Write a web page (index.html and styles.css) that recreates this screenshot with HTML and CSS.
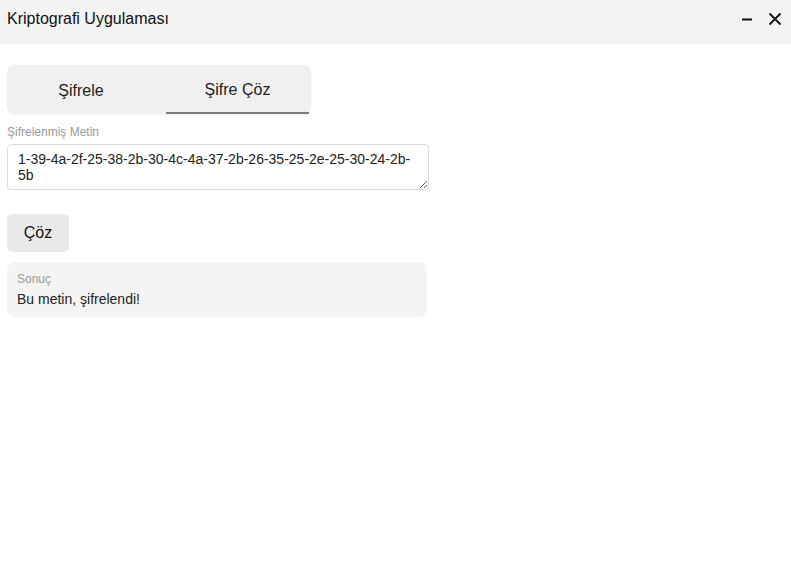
FILE: index.html
```html
<!DOCTYPE html>
<html lang="tr">
<head>
<meta charset="utf-8">
<link rel="stylesheet" href="styles.css">
</head>
<body>
<header class="titlebar">
  <span class="title">Kriptografi Uygulaması</span>
  <div class="controls">
    <svg class="ctl min" width="12" height="12" viewBox="0 0 12 12"><path d="M1 6.5h10" stroke="#111" stroke-width="2"/></svg>
    <svg class="ctl close" width="14" height="14" viewBox="0 0 14 14"><path d="M1.5 1.5l11 11M12.5 1.5l-11 11" stroke="#111" stroke-width="1.8"/></svg>
  </div>
</header>
<main class="content">
  <div class="tabs">
    <div class="tab first">Şifrele</div>
    <div class="tab active">Şifre Çöz</div>
  </div>
  <label class="label">Şifrelenmiş Metin</label>
  <textarea class="input">1-39-4a-2f-25-38-2b-30-4c-4a-37-2b-26-35-25-2e-25-30-24-2b-5b</textarea>
  <button class="btn">Çöz</button>
  <div class="result">
    <div class="result-label">Sonuç</div>
    <div class="result-text">Bu metin, şifrelendi!</div>
  </div>
</main>
</body>
</html>
```
FILE: styles.css
```css
* { box-sizing: border-box; }
html, body { margin: 0; padding: 0; background: #fff; }
body { font-family: "Liberation Sans", Arial, sans-serif; color: #111; }

.titlebar {
  height: 44px;
  background: #f3f3f3;
  display: flex;
  align-items: center;
  justify-content: space-between;
  padding: 0 9px 0 7px;
}
.title { font-size: 16px; color: #111; position: relative; top: -3px; }
.controls { display: flex; align-items: center; gap: 15px; position: relative; top: -3px; }
.ctl { display: block; }

.content { padding: 21px 7px 0 7px; display: flex; flex-direction: column; align-items: flex-start; }

.tabs {
  width: 304px;
  height: 49px;
  background: #f0f0f0;
  border-radius: 8px;
  display: flex;
  box-shadow: 0 1px 2px rgba(0,0,0,0.06);
}
.tab {
  display: flex;
  align-items: center;
  justify-content: center;
  font-size: 16px;
  color: #222;
  padding-top: 2px;
  flex: none;
}
.tab.first { width: 148px; }
.tab.active {
  width: 143px;
  margin-left: 11px;
  border-bottom: 2px solid #7a7a7a;
}

.label { font-size: 12px; color: #9a9a9a; margin-top: 11px; }

.input {
  margin-top: 5px;
  width: 422px;
  height: 46px;
  border: 1px solid #dcdcdc;
  border-radius: 4px;
  padding: 6px 10px;
  font-family: "Liberation Sans", Arial, sans-serif;
  font-size: 14px;
  line-height: 16px;
  color: #222;
  resize: vertical;
  background: #fff;
}

.btn {
  margin-top: 24px;
  width: 62px;
  height: 38px;
  border: none;
  border-radius: 5px;
  background: #e9e9e9;
  font-family: "Liberation Sans", Arial, sans-serif;
  font-size: 16px;
  color: #111;
  padding: 0;
}

.result {
  margin-top: 10px;
  width: 420px;
  height: 55px;
  background: #f4f4f4;
  border-radius: 8px;
  padding: 10px 10px;
}
.result-label { font-size: 12px; color: #9a9a9a; }
.result-text { font-size: 14px; color: #222; margin-top: 5px; }
```
